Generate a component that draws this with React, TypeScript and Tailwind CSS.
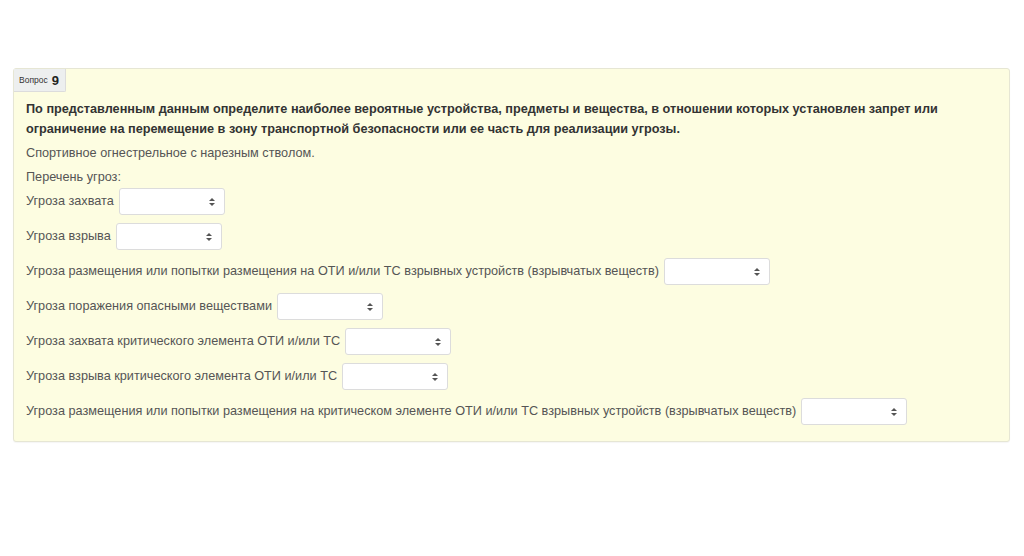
import React from "react";

const threats = [
  "Угроза захвата",
  "Угроза взрыва",
  "Угроза размещения или попытки размещения на ОТИ и/или ТС взрывных устройств (взрывчатых веществ)",
  "Угроза поражения опасными веществами",
  "Угроза захвата критического элемента ОТИ и/или ТС",
  "Угроза взрыва критического элемента ОТИ и/или ТС",
  "Угроза размещения или попытки размещения на критическом элементе ОТИ и/или ТС взрывных устройств (взрывчатых веществ)",
];

function FakeSelect() {
  return (
    <div className="relative ml-[5px] h-[27px] w-[106px] shrink-0 rounded-[3px] border border-[#dcdcdc] bg-white">
      <svg
        className="absolute right-[9px] top-1/2 -translate-y-1/2"
        width="6"
        height="9"
        viewBox="0 0 6 9"
      >
        <path d="M0 3.5 L3 0.5 L6 3.5 Z" fill="#555" />
        <path d="M0 5.5 L3 8.5 L6 5.5 Z" fill="#555" />
      </svg>
    </div>
  );
}

export default function App() {
  return (
    <div
      className="min-h-[556px] w-[1024px] bg-white pl-[13px] pr-[14px] pt-[68px]"
      style={{ fontFamily: '"Liberation Sans", Arial, sans-serif' }}
    >
      <div className="rounded-[3px] border border-[#e6e6d4] bg-[#fdfde1] pb-[8px] shadow-[0_1px_1px_rgba(0,0,0,0.04)]">
        {/* Question tab */}
        <div className="flex h-[23px] w-[52px] items-center gap-[4px] rounded-br-[2px] border-b border-r border-[#dcdcdc] bg-[#edefef] pl-[5px]">
          <span className="text-[8.5px] text-[#333]">Вопрос</span>
          <span className="text-[13px] font-bold leading-none text-[#222]">9</span>
        </div>

        <div className="pl-[12px] pr-[40px] pt-[7px] text-[12.7px] text-[#555]">
          <p className="leading-[20px] font-bold text-[#333]">
            По представленным данным определите наиболее вероятные устройства, предметы и вещества, в отношении которых установлен запрет или ограничение на перемещение в зону транспортной безопасности или ее часть для реализации угрозы.
          </p>
          <p className="mt-[4px] leading-[20px]">Спортивное огнестрельное с нарезным стволом.</p>
          <p className="mt-[4px] leading-[20px]">Перечень угроз:</p>
          <div className="mt-[1px] flex flex-col">
            {threats.map((t) => (
              <div key={t} className="mb-[8px] flex h-[27px] items-center">
                <span className="whitespace-nowrap">{t}</span>
                <FakeSelect />
              </div>
            ))}
          </div>
        </div>
      </div>
    </div>
  );
}
